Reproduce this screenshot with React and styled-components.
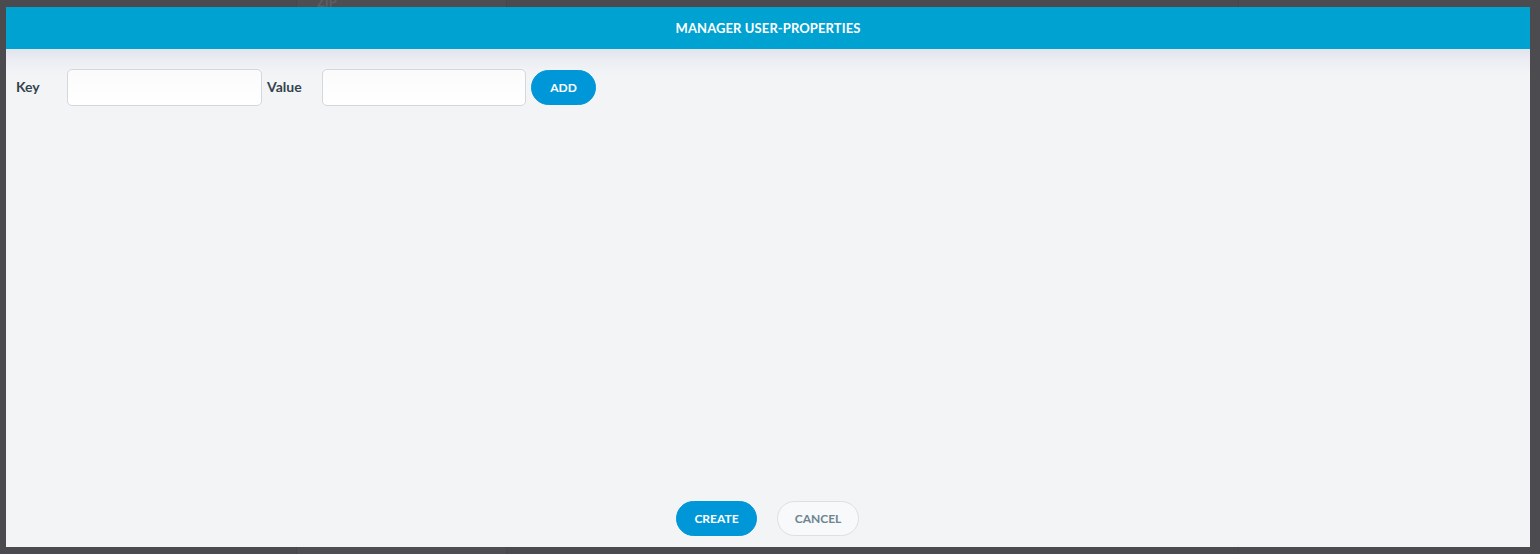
import React from "react";
import styled, { createGlobalStyle } from "styled-components";

const Global = createGlobalStyle`
  html, body { margin: 0; padding: 0; }
  body {
    background: #4e4e50;
    font-family: "Source Sans Pro", Lato, "Open Sans", sans-serif;
    overflow: hidden;
  }
`;

const Page = styled.div`
  width: 1540px;
  height: 554px;
  display: grid;
  grid-template-columns: 296px 210px 732px 1fr;
  background: #4c4c4f;
`;

const PageCol = styled.div`
  border-left: 1px solid ${(p) => (p.$line ? "#47474a" : "transparent")};
  background: ${(p) => p.$bg};
  padding: 0 20px;
  color: #5e5e62;
  font-size: 13px;
  font-weight: 700;
  line-height: 1;
`;

const Ghost = styled.div`
  margin-top: -4px;
`;

const Overlay = styled.div`
  position: fixed;
  inset: 0;
  display: flex;
  padding: 7px 10px 7px 6px;
`;

const Modal = styled.div`
  flex: 1;
  display: flex;
  flex-direction: column;
  background: #f3f4f6;
`;

const Header = styled.div`
  height: 42px;
  flex: none;
  background: #00a2d1;
  color: #fff;
  display: flex;
  align-items: center;
  justify-content: center;
  font-size: 13px;
  font-weight: 700;
  letter-spacing: 0.1px;
`;

const Body = styled.div`
  flex: 1;
  display: flex;
  flex-direction: column;
  padding: 20px 10px 11px 10px;
  background: linear-gradient(#e1e4ec 0px, #eceef3 12px, #f3f4f6 26px, #f3f4f6 100%);
`;

const FormRow = styled.div`
  display: flex;
  align-items: center;
  gap: 5px;
`;

const Label = styled.label`
  width: ${(p) => p.$w}px;
  font-size: 14px;
  font-weight: 700;
  color: #33444e;
  margin-top: -2px;
`;

const Input = styled.input`
  box-sizing: border-box;
  width: ${(p) => p.$w}px;
  height: 37px;
  border: 1px solid #d4d8de;
  border-radius: 5px;
  background: linear-gradient(#fbfbfc, #ffffff);
  outline: none;
`;

const Pill = styled.button`
  box-sizing: border-box;
  height: 35px;
  width: ${(p) => p.$w}px;
  border-radius: 18px;
  font-family: inherit;
  font-size: 12px;
  font-weight: 700;
  letter-spacing: 0;
  cursor: pointer;
  border: 1px solid ${(p) => (p.$secondary ? "#dcdfe4" : "#0097d9")};
  background: ${(p) => (p.$secondary ? "#f8f9fa" : "#0097d9")};
  color: ${(p) => (p.$secondary ? "#6d8491" : "#ffffff")};
`;

const Spacer = styled.div`
  flex: 1;
`;

const Footer = styled.div`
  display: flex;
  justify-content: center;
  gap: 20px;
  padding-right: 1px;
`;

export default function App() {
  return (
    <>
      <Global />
      <Page>
        <PageCol $bg="#4b4b4f" />
        <PageCol $bg="#4e4e52" $line>
          <Ghost>ZIP</Ghost>
        </PageCol>
        <PageCol $bg="#4b4b4f" $line />
        <PageCol $bg="#4c4c50" $line />
      </Page>
      <Overlay>
        <Modal>
          <Header>MANAGER USER-PROPERTIES</Header>
          <Body>
            <FormRow>
              <Label $w={46}>Key</Label>
              <Input $w={195} />
              <Label $w={50}>Value</Label>
              <Input $w={204} />
              <Pill $w={65}>ADD</Pill>
            </FormRow>
            <Spacer />
            <Footer>
              <Pill $w={81}>CREATE</Pill>
              <Pill $w={82} $secondary>
                CANCEL
              </Pill>
            </Footer>
          </Body>
        </Modal>
      </Overlay>
    </>
  );
}
